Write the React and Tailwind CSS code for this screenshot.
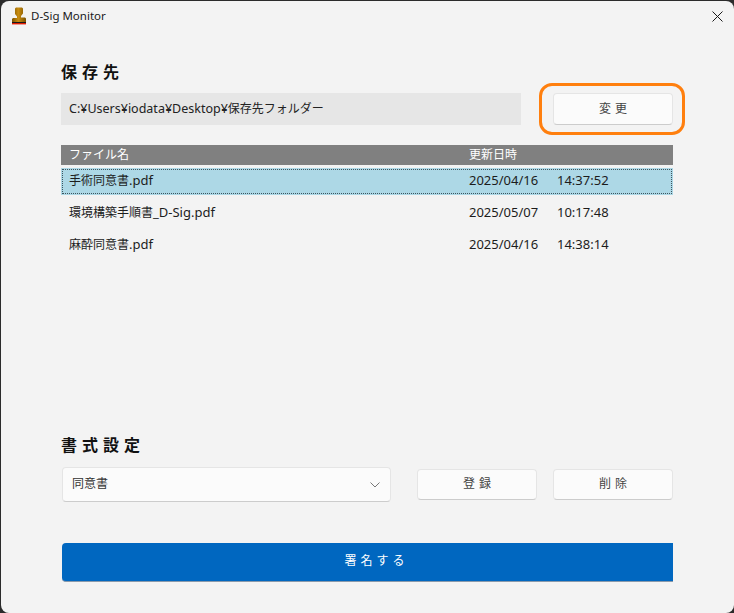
import React from "react";

function Stamp() {
  return (
    <svg width="16" height="18" viewBox="0 0 16 18" className="block">
      <defs>
        <linearGradient id="s" x1="0" x2="1" y1="0" y2="0">
          <stop offset="0" stopColor="#7a5200" />
          <stop offset="0.45" stopColor="#c98d10" />
          <stop offset="1" stopColor="#7a5200" />
        </linearGradient>
      </defs>
      <path d="M5 0.5h6l1 1v5l-2 2.5v1.5h4l1 1v3.5H1V12l1-1h4V9.5L4 7V1.5z" fill="url(#s)" />
      <rect x="1" y="15" width="14" height="1" fill="#1a1a1a" />
      <rect x="1" y="16" width="14" height="1.4" fill="#e01b00" />
    </svg>
  );
}

function Btn({ children, className = "" }) {
  return (
    <div className={"flex items-center justify-center rounded-[4px] border border-[#e5e5e5] border-b-[#cccccc] bg-[#fbfbfb] pl-[4px] text-[12px] tracking-[4px] text-[#444444] " + className}>
      {children}
    </div>
  );
}

function J({ children }) {
  return <span className="text-[12px]">{children}</span>;
}

function Row({ name, ext, date, time, selected }) {
  return (
    <div className="flex h-[32px] items-center">
      <div className={"flex h-[27px] w-full items-center text-[13px] text-[#1c1c1c] " + (selected ? "bg-[#add8e6] outline-1 -outline-offset-2 outline-dotted outline-[#3f565f]" : "")}>
        <span className="w-[408px] pl-[8px]"><J>{name}</J>{ext}</span>
        <span className="w-[88px]">{date}</span>
        <span>{time}</span>
      </div>
    </div>
  );
}

export default function App() {
  return (
    <div className="h-[613px] w-[734px] bg-[#2b2b2b] font-['Noto_Sans','Noto_Sans_CJK_JP',sans-serif]">
      <div className="relative flex h-[612px] w-[733px] translate-x-[1px] translate-y-[1px] flex-col rounded-[8px] bg-[#f3f3f3]">
        <div className="flex h-[30px] items-center pl-[10px]">
          <Stamp />
          <span className="ml-[4px] text-[11.5px] text-[#1a1a1a]">D-Sig Monitor</span>
          <svg width="11" height="11" viewBox="0 0 11 11" className="ml-auto mr-[11px]">
            <path d="M0.5 0.5l10 10M10.5 0.5l-10 10" stroke="#1a1a1a" strokeWidth="1" fill="none" />
          </svg>
        </div>

        <div className="flex flex-1 flex-col pl-[60px] pr-[61px]">
          <h2 className="mt-[31px] text-[16px] font-bold leading-[20px] tracking-[5px] text-[#111111]">保存先</h2>
          <div className="mt-[11px] flex h-[32px] items-center">
            <div className="flex h-[32px] w-[460px] items-center bg-[#e6e6e6] pl-[8px] text-[12.5px] text-[#222222]">
              <span>C:¥Users¥iodata¥Desktop¥<J>保存先フォルダー</J></span>
            </div>
            <Btn className="relative ml-[32px] h-[32px] w-[120px]">
              変更
              <div className="absolute -bottom-[11px] -left-[15px] -right-[13px] -top-[11px] rounded-[13px] border-[3px] border-[#ff7f0e]" />
            </Btn>
          </div>

          <div className="mt-[20px] flex h-[20px] items-center bg-[#808080] text-[12px] text-white">
            <span className="w-[408px] pl-[8px]">ファイル名</span>
            <span>更新日時</span>
          </div>
          <Row name="手術同意書" ext=".pdf" date="2025/04/16" time="14:37:52" selected />
          <Row name="環境構築手順書" ext="_D-Sig.pdf" date="2025/05/07" time="10:17:48" />
          <Row name="麻酔同意書" ext=".pdf" date="2025/04/16" time="14:38:14" />

          <h2 className="mt-[174px] text-[16px] font-bold leading-[20px] tracking-[5px] text-[#111111]">書式設定</h2>
          <div className="mt-[12px] flex items-center">
            <div className="ml-[1px] flex h-[35px] w-[329px] items-center justify-between rounded-[4px] border border-[#e5e5e5] border-b-[#cccccc] bg-[#fbfbfb] pl-[9px] pr-[10px] pb-[2px] text-[12px] text-[#333333]">
              <span>同意書</span>
              <svg width="10" height="6" viewBox="0 0 10 6" className="mt-[3px]"><path d="M0.5 0.5L5 5l4.5-4.5" stroke="#777777" fill="none" strokeWidth="1" /></svg>
            </div>
            <Btn className="ml-[26px] h-[31px] w-[120px] pb-[2px]">登録</Btn>
            <Btn className="ml-[16px] h-[31px] w-[120px] pb-[2px]">削除</Btn>
          </div>

          <div className="ml-[1px] mt-[41px] flex h-[39px] w-[611px] items-center justify-center rounded-l-[4px] border-b border-[#8a9aab] bg-[#0067c0] pl-[18px] pb-[2px] text-[12px] tracking-[4px] text-white">
            署名する
          </div>
        </div>
      </div>
    </div>
  );
}
